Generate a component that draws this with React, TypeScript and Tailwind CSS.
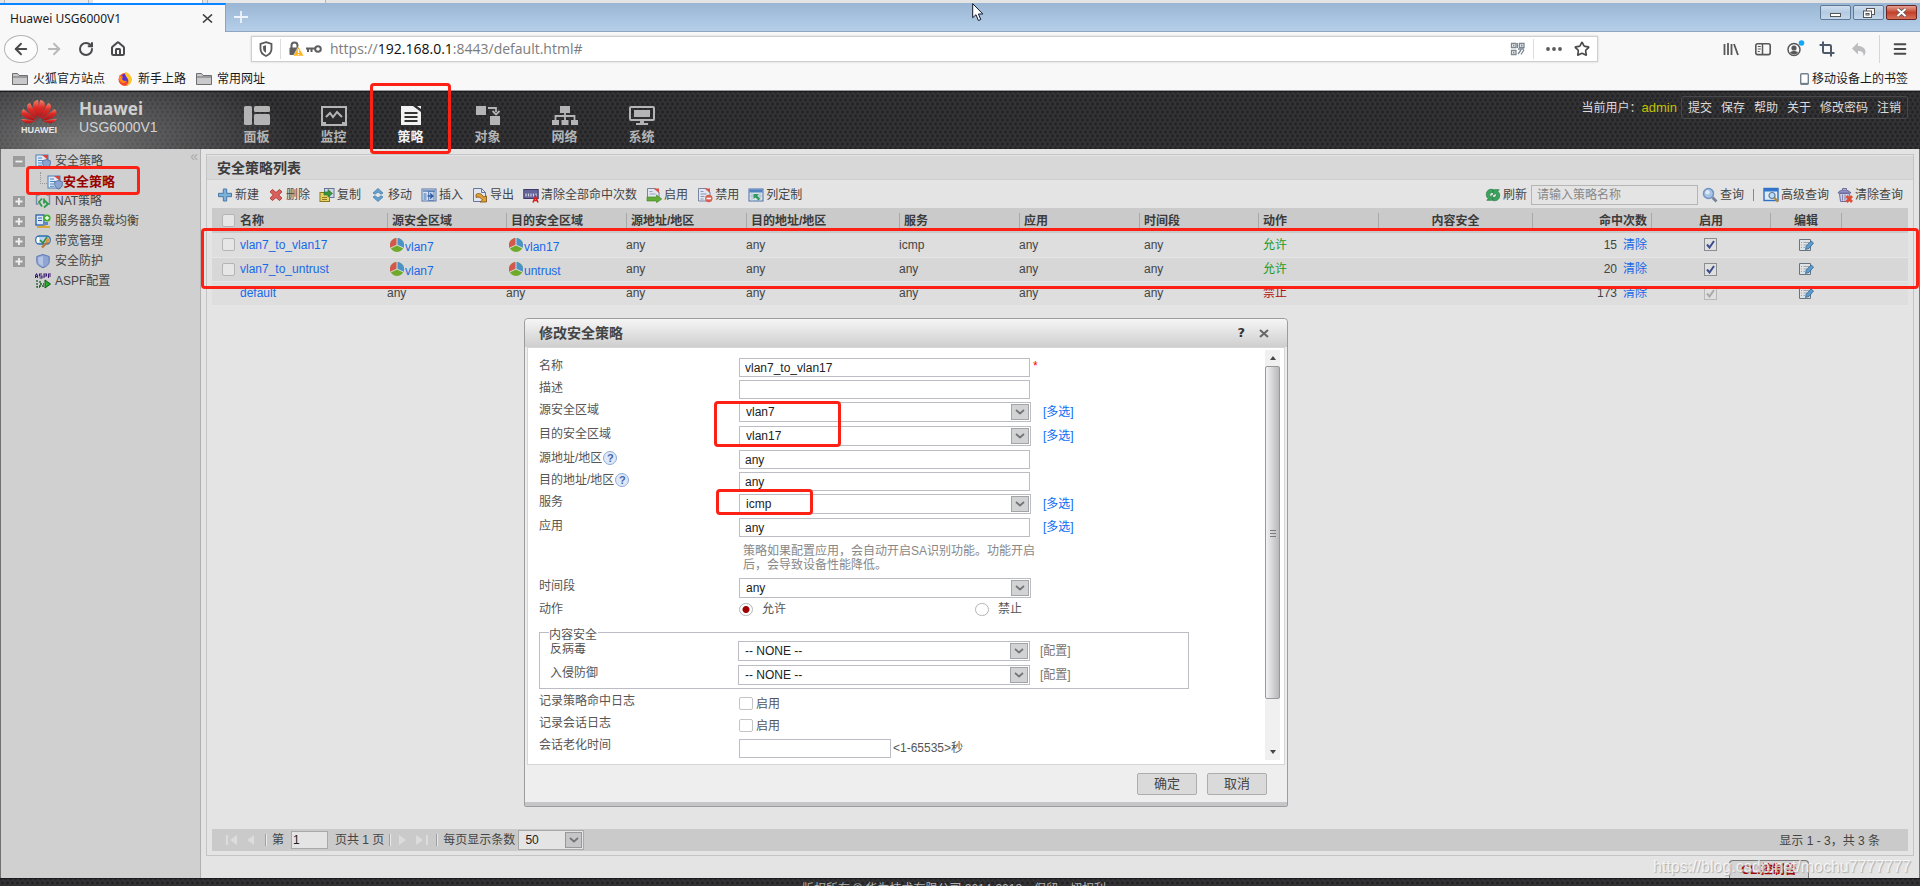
import { useState } from 'react';
import type { ReactNode } from 'react';
import { Menu, Star, Crop, House, RotateCw, ArrowLeft, ArrowRight } from 'lucide-react';

type IconProps = { className?: string };

/* ---------- browser icons ---------- */

const Shield = () => (
  <svg className="h-4 w-4" viewBox="0 0 16 16" fill="none" stroke="#5a5a5c">
    <path d="M8 1.2 13.5 3v5c0 3.4-2.4 5.6-5.5 7-3.1-1.4-5.5-3.6-5.5-7V3z" strokeWidth="1.8" />
    <path d="M8 4.2v7.5c-1.8-1-2.9-2.2-2.900-4V5z" fill="#5a5a5c" stroke="none" />
  </svg>
);

const LockWarning = () => (
  <svg className="h-4 w-4" viewBox="0 0 16 16">
    <path d="M3.5 7V4.500a3 3 0 0 1 6 0V7" fill="none" stroke="#5f5f62" strokeWidth="2" />
    <rect x="1.5" y="6.500" width="9.5" height="7.5" rx="1" fill="#5f5f62" />
    <path d="m10.5 5.500 5.300 9.500H5.200z" fill="#ffb41f" stroke="#fff" strokeWidth=".5" />
    <path d="M10.5 8.500v3.500M10.500 13v1" stroke="#fff" strokeWidth="1.3" />
  </svg>
);

const Key = () => (
  <svg className="h-4 w-4" viewBox="0 0 16 16" fill="none" stroke="#5f5f61" strokeWidth="2">
    <circle cx="12" cy="8" r="2.8" />
    <path d="M9 7.500H0M2 8v3M5.500 8v3" />
  </svg>
);

const QrCode = () => (
  <svg className="h-4 w-4" viewBox="0 0 16 16" fill="none" stroke="#7d8794" strokeWidth="1.3">
    <path d="M1.500 2.500h4.500v4H1.500zM9.500 2.500H14v4H9.500zM1.500 9.500h4.500v4H1.500zM3 4.500h1.500M11 4.500h1.500M3 11.500h1.500" />
    <path d="m8 13 3-4M11 13.500l3-4.500M7.500 2v5M8 8h6" />
  </svg>
);

const Library = () => (
  <svg className="h-4 w-4" viewBox="0 0 16 16" stroke="#58585a" strokeWidth="1.8">
    <path d="M1.500 3v11M5 2v12M8.500 3v11M11 3l4 11" />
  </svg>
);

const SidebarIcon = () => (
  <svg className="h-4 w-4" viewBox="0 0 16 16" fill="none" stroke="#58585a">
    <rect x=".8" y="2.800" width="14.4" height="10.8" rx="1.8" strokeWidth="1.6" />
    <path d="M7.500 3v10" strokeWidth="1.5" />
    <path d="M2.800 5.500h3M2.800 8h3M2.800 10.500h2" />
  </svg>
);

const Account = () => (
  <svg className="h-4 w-4 overflow-visible" viewBox="0 0 16 16">
    <circle cx="7" cy="8.500" r="6" fill="none" stroke="#58585a" strokeWidth="1.5" />
    <circle cx="7" cy="7" r="2.6" fill="#58585a" />
    <path d="M3 11.500c1.500-2 6.500-2 8 0-1 1.300-2.500 2-4 2s-3-.7-4-2" fill="#58585a" />
    <circle cx="14.500" cy="2" r="2.8" fill="#12a8f5" />
  </svg>
);

const UndoArrow = () => (
  <svg className="h-4 w-4" viewBox="0 0 16 16" fill="#bdbdbf">
    <path d="M7 1.500v3.500c4.500 0 7.500 2.500 7.500 6 0 1.500-.7 3-2 4 .5-3.500-1.500-5-5.500-5v3.500L1 7.500z" />
  </svg>
);

const Folder = () => (
  <svg className="h-4 w-4" viewBox="0 0 16 16">
    <path d="M.5 13.500v-11h5l1.500 2h8.500v9z" fill="#c9c9cb" stroke="#6e6e70" />
    <path d="M.5 6h15" stroke="#6e6e70" />
  </svg>
);

const Firefox = () => (
  <svg className="h-4 w-4" viewBox="0 0 16 16">
    <circle cx="8" cy="8.500" r="6.500" fill="#f4462d" />
    <circle cx="8.500" cy="7" r="4.200" fill="#5a2fd6" />
    <path d="M8 .8c3.500 1 6.500 3.700 6.500 7.700 0 3-2 6-6 6.300 3-1.500 3.600-4 2.500-6.200C10 6 7.500 4.500 8 .8" fill="#ffc92e" />
    <path d="M2.500 4c1 1.500 2 1.500 3.500 1.500L5 8c1 2 3 2.500 5 1.500-1 3-5.500 3.500-7.500 0-.8-1.800-.6-4 0-5.500" fill="#ff8a16" />
  </svg>
);

const HuaweiLogo = () => (
  <svg className="h-6 w-[38px]" viewBox="0 0 38 24" preserveAspectRatio="none">
    <defs>
      <linearGradient id="petal" x1="0" y1="0" x2="0" y2="1">
        <stop offset="0" stopColor="#f0836a" />
        <stop offset=".4" stopColor="#dc2b27" />
        <stop offset="1" stopColor="#a8161a" />
      </linearGradient>
    </defs>
    <g fill="url(#petal)">
      <path d="M18.300 19C14.500 13 12 8 13.500 3c.8-2 2.700-2.800 4.500-3 1.500 6 1.500 13 .3 19" />
      <path d="M19.700 19C23.500 13 26 8 24.500 3c-.8-2-2.700-2.800-4.500-3-1.500 6-1.500 13-.3 19" />
      <path d="M17 19.800C11 16 6.500 10 7 6c.3-1.500 1.500-2.600 3-3 3 4.500 5.500 10.500 7 16.800" />
      <path d="M21 19.800C27 16 31.500 10 31 6c-.3-1.500-1.500-2.600-3-3-3 4.500-5.500 10.500-7 16.800" />
      <path d="M16 20.500C8 20 1.800 17 1.500 13c-.1-1.800.8-3.200 2-4C7.500 12 12.500 16 16 20.500" />
      <path d="M22 20.500C30 20 36.200 17 36.500 13c.1-1.800-.8-3.200-2-4C30.500 12 25.500 16 22 20.500" />
      <path d="M15.500 21.300C10 24 4 24.200 1 19c5 .2 10 1 14.500 2.300" />
      <path d="M22.500 21.300C28 24 34 24.200 37 19c-5 .2-10 1-14.500 2.300" />
    </g>
  </svg>
);

/* ---------- main navigation icons ---------- */

const NavDashboard = () => (
  <svg className="h-5 w-[26px]" viewBox="0 0 26 20" fill="currentColor">
    <rect x="0" y="0" width="8" height="19" rx="1.500" />
    <rect x="10" y="0" width="16" height="6" rx="1.500" />
    <rect x="10" y="8" width="16" height="11" rx="1.500" />
  </svg>
);

const NavMonitor = () => (
  <svg className="h-5 w-[26px]" viewBox="0 0 26 20" fill="none" stroke="currentColor" strokeWidth="2">
    <rect x="1" y="1" width="24" height="18" fill="#2b2b2d" />
    <path d="m5 11 4-4 3 4 4-5 5 5" />
    <path d="M2 17h3M21 17h4" />
  </svg>
);

const NavPolicy = () => (
  <svg className="h-5 w-[26px]" viewBox="0 0 26 20">
    <path d="M3 0h12l8 6v13H3z" fill="currentColor" />
    <path d="M19 0h4v3z" fill="currentColor" />
    <path d="M6.500 7h13M6.500 11h13M6.500 15h13" stroke="#333" strokeWidth="1.800" />
  </svg>
);

const NavObject = () => (
  <svg className="h-5 w-[26px]" viewBox="0 0 26 20" fill="currentColor">
    <rect x="1" y="0" width="10" height="9" />
    <rect x="15" y="10" width="10" height="9" />
    <path d="M13 2h8v4M17.500 5l3.500 3.500L24.500 5" fill="none" stroke="currentColor" strokeWidth="1.800" />
  </svg>
);

const NavNetwork = () => (
  <svg className="h-5 w-[26px]" viewBox="0 0 26 20" fill="currentColor">
    <rect x="8" y="0" width="10" height="7" />
    <rect x="0" y="14" width="7" height="5" />
    <rect x="9.500" y="14" width="7" height="5" />
    <rect x="19" y="14" width="7" height="5" />
    <path d="M13 6v8M3.500 14v-4h19v4" fill="none" stroke="currentColor" strokeWidth="1.800" />
  </svg>
);

const NavSystem = () => (
  <svg className="h-5 w-[26px]" viewBox="0 0 26 20" fill="currentColor">
    <rect x="1" y="1" width="24" height="13" rx="1" fill="none" stroke="currentColor" strokeWidth="2" />
    <rect x="5" y="4" width="16" height="7" />
    <path d="M11 14h4v3h4v2H7v-2h4z" />
  </svg>
);

/* ---------- page icons ---------- */

const PolicyIcon = () => (
  <svg className="h-4 w-4 shrink-0" viewBox="0 0 16 16">
    <rect x="1" y="2" width="12" height="12" fill="#dfeaf6" stroke="#4d7fb5" />
    <path d="M3 5h4M3 7.500h5M3 10h4M3 12.300h4" stroke="#4f88c6" />
    <path d="M7 2h6v5z" fill="#d9453b" />
    <path d="m11.500 6.500 3.800 1.200v3c0 2-1.600 3.300-3.800 4.300-2.200-1-3.800-2.300-3.800-4.300v-3z" fill="#8ba4d2" stroke="#4a659f" strokeWidth=".8" />
  </svg>
);

const NatIcon = () => (
  <svg className="h-4 w-4 shrink-0" viewBox="0 0 16 16" fill="none">
    <path d="M4.500 2H1.500v9h2M11.500 2h3v9h-2" stroke="#7a8ea8" strokeWidth="1.400" />
    <path d="M7 5.500 4 9l3 4.500M9 5.500v5M9 7l4 4-4 3.500" stroke="#2f9c4c" strokeWidth="1.800" />
  </svg>
);

const ServerIcon = () => (
  <svg className="h-4 w-4 shrink-0" viewBox="0 0 16 16">
    <rect x="1" y="2" width="8" height="10" fill="#dce8f7" stroke="#2b5fa8" strokeWidth="1.300" />
    <path d="M3 5h4M3 7.500h4" stroke="#2b5fa8" />
    <circle cx="12" cy="5" r="3.600" fill="#3fb32a" />
    <path d="M12 3v4M10 5h4" stroke="#fff" strokeWidth="1.300" />
    <path d="M2 14h13M10 10v4" stroke="#d8a93a" strokeWidth="2" />
    <rect x="8" y="9" width="5" height="3" fill="#5c88c4" />
  </svg>
);

const BandwidthIcon = () => (
  <svg className="h-4 w-4 shrink-0" viewBox="0 0 16 16">
    <rect x=".8" y="3" width="14.400" height="8" rx="3.500" fill="#b6d2ef" stroke="#2f6cb0" strokeWidth="1.300" />
    <ellipse cx="3" cy="7" rx="1.500" ry="3" fill="#fff" />
    <path d="m5 7 3 3 4-6" fill="none" stroke="#2d8b3d" strokeWidth="1.600" />
    <path d="m7 14.500 6-6" stroke="#b87a3c" strokeWidth="2.400" />
    <circle cx="13" cy="7.500" r="2.200" fill="#d99a4a" />
  </svg>
);

const DefenseIcon = () => (
  <svg className="h-4 w-4 shrink-0" viewBox="0 0 16 16">
    <path d="m8 1.500 6.200 2v5c0 3-2.700 4.900-6.200 6.300-3.500-1.400-6.200-3.300-6.200-6.300v-5z" fill="#8fa6d4" stroke="#5a76b5" />
    <path d="M8 3 3.200 4.500v4c0 2.200 2 3.600 4.800 4.800z" fill="#b4c4e4" />
  </svg>
);

const AspfIcon = () => (
  <svg className="h-4 w-4 shrink-0" viewBox="0 0 16 16" fill="none">
    <path d="M.5 5V2.500L1.500 1l1 1.500V5M.5 3.500h2M7 1H4.500v2H7v2H4.500M9 5V1h2.500v2H9M13.500 5V1H16M13.500 3H16" stroke="#3b1d74" strokeWidth="1.100" />
    <path d="M2 7v7h3M5 8v3h4M4 13h5" stroke="#1c5c2a" strokeWidth="1.300" strokeDasharray="2 1" />
    <path d="m10 7 5.500 4-5.500 4z" fill="#30a82c" stroke="#0e5f18" />
  </svg>
);

const AddIcon = () => (
  <svg className="h-4 w-4" viewBox="0 0 16 16">
    <path d="M6.300 2h3.400v4.300H14.500v3.400H9.700V14H6.300V9.700H1.500V6.300h4.800z" fill="#7fb0d8" stroke="#4479a8" />
  </svg>
);

const DeleteIcon = () => (
  <svg className="h-4 w-4" viewBox="0 0 16 16">
    <path d="m4.500 2.500 3.500 3 3.500-3 2.500 2.300-3.300 3.200 3.300 3.200-2.500 2.300-3.500-3-3.500 3L2 11.200 5.300 8 2 4.800z" fill="#d9605c" stroke="#b03f3c" />
  </svg>
);

const CopyIcon = () => (
  <svg className="h-4 w-4" viewBox="0 0 16 16">
    <rect x="5.500" y="1.500" width="9.500" height="9" fill="#cfd6e4" stroke="#67759b" />
    <rect x="1" y="5.500" width="9.500" height="9" fill="#e6d164" stroke="#8d7922" />
    <path d="M3 10.500h5M3 12.500h5" stroke="#8d7922" />
    <path d="M5 5h4V2.500L13.500 6.500 9 10V8H5z" fill="#39963e" stroke="#1f6d2a" strokeWidth=".6" />
  </svg>
);

const MoveIcon = () => (
  <svg className="h-4 w-4" viewBox="0 0 16 16">
    <path d="M8 1.500 13 6l-2 1.200L8 5 5 7.200 3 6zM8 14.500 3 10l2-1.200L8 11l3-2.200 2 1.200z" fill="#67a3d2" stroke="#437fae" strokeWidth=".8" />
  </svg>
);

const InsertIcon = () => (
  <svg className="h-4 w-4" viewBox="0 0 16 16">
    <rect x="1" y="2" width="14" height="12" fill="#dbe4ef" stroke="#5876a6" />
    <rect x="2" y="3" width="12" height="2" fill="#7a9ac6" />
    <rect x="2.500" y="6" width="3" height="7" fill="#86a5d0" />
    <rect x="7.500" y="4.500" width="5.500" height="9" fill="#c2d3e9" stroke="#4f74ad" strokeWidth=".8" />
    <path d="M6.500 9h5M9 6.500l3 2.500-3 2.500" fill="none" stroke="#2b5aa6" strokeWidth="1.300" />
  </svg>
);

const ExportIcon = () => (
  <svg className="h-4 w-4" viewBox="0 0 16 16">
    <path d="M1.500 1.500h8l4 4v9h-12z" fill="#e2e6ee" stroke="#6576a3" />
    <path d="M9.500 1.500v4h4" fill="none" stroke="#6576a3" />
    <path d="M4 7.500c3-2.500 6.500 0 7.500 2.500l3-1v6H8l2.500-2C9 10.500 6.500 9.500 4 10.500z" fill="#e0a034" stroke="#7c5214" strokeWidth=".8" />
  </svg>
);

const ClearHitIcon = () => (
  <svg className="h-4 w-4" viewBox="0 0 16 16">
    <rect x=".8" y="2.500" width="14.400" height="9" fill="#65649a" stroke="#3c3b6a" />
    <path d="M3 6.500v3M5.500 6.500v3M8 6.500v3M10.500 6.500v3M13 6.500v3" stroke="#d0d0e8" strokeWidth="1.200" />
    <path d="m10 15.500 2.500-6 2.500 6M11 13.500h3" fill="none" stroke="#d8201c" strokeWidth="1.600" />
  </svg>
);

const EnableIcon = () => (
  <svg className="h-4 w-4" viewBox="0 0 16 16">
    <path d="M1.500 1.500h8l3.500 3.500v8H1.500z" fill="#e2e6ee" stroke="#7684a5" />
    <path d="M7.500 1.500 13 6V1.500z" fill="#d9534a" />
    <path d="M3.500 4.500h3M3.500 7h6" stroke="#98a5c2" />
    <path d="M1 10h9.500V8L15.800 12l-5.300 3.700V14H1z" fill="#62ad3a" stroke="#437f20" strokeWidth=".6" />
  </svg>
);

const DisableIcon = () => (
  <svg className="h-4 w-4" viewBox="0 0 16 16">
    <path d="M1.500 1.500h8l3.500 3.500v9H1.500z" fill="#e2e6ee" stroke="#7684a5" />
    <path d="M7.500 1.500 13 6V1.500z" fill="#d9534a" />
    <path d="M3.500 4.500h3M3.500 7h6M3.500 9.500h4M3.500 12h3" stroke="#8896b6" />
    <circle cx="11.800" cy="11.500" r="3.700" fill="#d9604f" />
    <path d="M9.500 11.500h4.600" stroke="#fff" strokeWidth="1.600" />
  </svg>
);

const ColumnsIcon = () => (
  <svg className="h-4 w-4" viewBox="0 0 16 16">
    <rect x="1" y="2" width="14" height="12" fill="#dde6e6" stroke="#4c6fae" />
    <rect x="1.500" y="2.500" width="13" height="3" fill="#4f82c0" />
    <path d="M4 6v8M12 6v8M2 9h12" stroke="#a9bfd8" />
    <path d="M5.500 7H11L9.200 8.700l3 3-1.700 1.700-3-3L5.500 12z" fill="#2e9a5c" />
  </svg>
);

const RefreshIcon = () => (
  <svg className="h-4 w-4" viewBox="0 0 16 16" fill="#3aa35c" stroke="#237c40" strokeWidth=".7">
    <path d="M8 2.500C4 1.500 1.300 4 1.300 7.500c0 2 .9 3.300 2 4.300L1.800 13.300H7.500V8L5.600 9.700C4 8 4.500 5.300 8 5.500z" />
    <path d="M8 13.500c4 1 6.700-1.500 6.700-5 0-2-.9-3.300-2-4.300l1.500-1.500H8.500V8l1.900-1.700c1.600 1.700 1.100 4.400-2.400 4.200z" />
  </svg>
);

const SearchIcon = () => (
  <svg className="h-4 w-4" viewBox="0 0 16 16">
    <circle cx="6.500" cy="6.500" r="5" fill="#a5c4e6" stroke="#7293c0" strokeWidth="1.500" />
    <circle cx="5.500" cy="5.300" r="2.200" fill="#dce8f5" />
    <path d="m10.500 10.500 4 4" stroke="#77829b" strokeWidth="2.800" />
  </svg>
);

const AdvancedSearchIcon = () => (
  <svg className="h-4 w-4" viewBox="0 0 16 16">
    <rect x="1" y="1.500" width="14" height="12" fill="#e2ebf5" stroke="#2f6fc4" strokeWidth="1.400" />
    <rect x="1" y="1.500" width="14" height="3" fill="#2f76cc" />
    <circle cx="9" cy="8.500" r="3" fill="#bcdcf7" stroke="#5c7f9f" strokeWidth="1.200" />
    <path d="m11.300 10.800 3.700 4" stroke="#b48a36" strokeWidth="2.200" />
  </svg>
);

const TrashIcon = () => (
  <svg className="h-4 w-4" viewBox="0 0 16 16">
    <path d="M2.500 6.500h10L11.500 14.500h-8z" fill="#d0d0e2" stroke="#6c6ca0" />
    <path d="M5.500 7.500v6M8 7.500v6" stroke="#8585b3" />
    <path d="M1 6C2.500 2 11.500 2 14 6z" fill="#9090bd" stroke="#6c6ca0" />
    <path d="M5.500 3V1.500h4V3" fill="none" stroke="#6c6ca0" />
    <path d="m9.500 9 5.500 6M15 9l-5.500 6" stroke="#dc4f36" strokeWidth="2.800" />
  </svg>
);

const ZoneIcon = () => (
  <svg className="h-4 w-4 shrink-0" viewBox="0 0 16 16">
    <circle cx="8" cy="8" r="7" fill="#6faa2a" />
    <path d="M8 8V1a7 7 0 0 1 6.300 10z" fill="#4a92c8" />
    <path d="M8 8 1.700 11A7 7 0 0 1 8 1z" fill="#d4574c" />
    <path d="M8 1v7M8 8l6.300 3M8 8l-6.300 3" stroke="#dfe6e8" strokeWidth=".9" />
  </svg>
);

const EditIcon = () => (
  <svg className="h-4 w-4" viewBox="0 0 16 16">
    <path d="M1.500 2.500h11v11h-11z" fill="#e0e3e6" stroke="#6a7480" />
    <path d="M3 5.500h1M5.500 5.500H11M3 8h1M5.500 8H9M3 10.500h1M5.500 10.500H7" stroke="#9aa3ae" />
    <path d="m7.500 12.500.8-3.500L13 4l2.500 2-4.500 5.500z" fill="#5c9ccf" stroke="#34658f" strokeWidth=".8" />
  </svg>
);

const HelpIcon = () => (
  <span className="ml-px flex h-[14px] w-[14px] items-center justify-center rounded-full border border-[#8fa9d6] bg-[#dfe8f7] text-[11px] leading-none font-bold text-[#3f68b3]">?</span>
);

const Chevron = ({ className }: IconProps) => (
  <svg className={className} viewBox="0 0 10 6" fill="none" stroke="#747476" strokeWidth="1.700">
    <path d="m1 1 4 3.500L9 1" />
  </svg>
);

const MousePointer = () => (
  <svg className="h-[19px] w-3" viewBox="0 0 12 19">
    <path d="M.7.7v14l3.300-3 2.400 5.800 2.400-1-2.400-5.500h4.500z" fill="#fff" stroke="#101828" />
  </svg>
);

/* ---------- data ---------- */

const navItems = [
  { label: '面板', icon: <NavDashboard /> },
  { label: '监控', icon: <NavMonitor /> },
  { label: '策略', icon: <NavPolicy />, active: true },
  { label: '对象', icon: <NavObject /> },
  { label: '网络', icon: <NavNetwork /> },
  { label: '系统', icon: <NavSystem /> },
];

const userLinks = ['提交', '保存', '帮助', '关于', '修改密码', '注销'];

const treeItems = [
  { label: 'NAT策略', icon: <NatIcon />, expandable: true },
  { label: '服务器负载均衡', icon: <ServerIcon />, expandable: true },
  { label: '带宽管理', icon: <BandwidthIcon />, expandable: true },
  { label: '安全防护', icon: <DefenseIcon />, expandable: true },
  { label: 'ASPF配置', icon: <AspfIcon />, expandable: false },
];

const tools = [
  { label: '新建', icon: <AddIcon /> },
  { label: '删除', icon: <DeleteIcon /> },
  { label: '复制', icon: <CopyIcon /> },
  { label: '移动', icon: <MoveIcon /> },
  { label: '插入', icon: <InsertIcon /> },
  { label: '导出', icon: <ExportIcon /> },
  { label: '清除全部命中次数', icon: <ClearHitIcon /> },
  { label: '启用', icon: <EnableIcon /> },
  { label: '禁用', icon: <DisableIcon /> },
  { label: '列定制', icon: <ColumnsIcon /> },
];

const rules = [
  { name: 'vlan7_to_vlan17', src: 'vlan7', dst: 'vlan17', service: 'icmp', allow: true, hits: 15 },
  { name: 'vlan7_to_untrust', src: 'vlan7', dst: 'untrust', service: 'any', allow: true, hits: 20 },
  { name: 'default', src: '', dst: '', service: 'any', allow: false, hits: 173 },
];

const plainHeads = ['源安全区域', '目的安全区域', '源地址/地区', '目的地址/地区', '服务', '应用', '时间段', '动作'];

/* ---------- shared pieces ---------- */

const Highlight = ({ className }: IconProps) => (
  <div className={`pointer-events-none absolute rounded-sm border-3 border-[#fd2014] ${className}`} />
);

const Divider = ({ className }: IconProps) => (
  <span className={`h-3 w-[2px] border-l border-[#a0a0a0] bg-[#e8e8e8] ${className}`} />
);

function ToolButton({ icon, label }: { icon: ReactNode; label: string }) {
  return (
    <button className="flex items-center gap-[2px] whitespace-nowrap">
      {icon}
      {label}
    </button>
  );
}

function DarkStrip({ className, children }: { className: string; children?: ReactNode }) {
  return (
    <div
      className={`bg-[#333335] bg-[radial-gradient(circle_at_center,#232325_1px,transparent_2px),radial-gradient(circle_at_center,#232325_1px,transparent_2px)] bg-[length:5px_8px] bg-[position:0_0,3px_4px] ${className}`}
    >
      {children}
    </div>
  );
}

/* ---------- browser chrome ---------- */

function BrowserChrome() {
  return (
    <div className="shrink-0 font-['Open_Sans','Noto_Sans_CJK_SC',sans-serif] text-[#18181a]">
      <div className="flex h-[3px] bg-[#e4e4e4]">
        <div className="ml-1 w-[85px] border-x border-[#b5b5b5] bg-[#ebebeb]" />
        <div className="ml-1 w-[110px] border-r border-[#b5b5b5] bg-white" />
        <div className="ml-1 w-[119px] border-x border-[#b5b5b5] bg-[#e9e9e9]" />
      </div>
      <div className="relative flex h-[29px] justify-between border-b border-[#8fa6bf] bg-linear-to-b from-[#9ab6d3] to-[#b5cfea]">
        <div className="flex">
          <div className="relative -mb-px flex w-[226px] items-center justify-between border-t-2 border-r border-t-[#0a84ff] border-r-[#8ba3bd] bg-[#f8f8f9] pr-3 pl-[10px] font-['Noto_Sans',sans-serif] text-xs">
            <span>Huawei USG6000V1</span>
            <button aria-label="关闭标签页">
              <svg className="h-[9px] w-[11px]" viewBox="0 0 11 9" stroke="#3e3e40" strokeWidth="1.600">
                <path d="m1 .5 9 8M10 .5l-9 8" />
              </svg>
            </button>
          </div>
          <button aria-label="新标签页" className="ml-2">
            <svg className="h-3 w-[14px]" viewBox="0 0 14 12" stroke="#eef4fb" strokeWidth="1.800">
              <path d="M7 0v12M0 6h14" />
            </svg>
          </button>
        </div>
        <div className="flex gap-[2px] pt-[2px] pr-[3px]">
          <button aria-label="最小化" className="flex h-[15px] w-[31px] items-center justify-center rounded-xs border border-[#5f7896] bg-linear-to-b from-[#cfdfef] via-[#b4cae1] to-[#c3d7ec]">
            <span className="mt-1 h-1 w-[11px] border border-[#555] bg-white" />
          </button>
          <button aria-label="还原" className="flex h-[15px] w-[31px] items-center justify-center rounded-xs border border-[#5f7896] bg-linear-to-b from-[#cfdfef] via-[#b4cae1] to-[#c3d7ec]">
            <svg className="h-[10px] w-3" viewBox="0 0 12 10" fill="#fff" stroke="#555">
              <rect x="3.500" y=".5" width="8" height="6" />
              <rect x=".5" y="3" width="8" height="6.500" />
              <rect x="3" y="5.500" width="3" height="1.500" />
            </svg>
          </button>
          <button aria-label="关闭" className="flex h-[15px] w-[31px] items-center justify-center rounded-xs border border-[#6b2420] bg-linear-to-b from-[#e3a093] via-[#c3402a] to-[#d4705a]">
            <svg className="h-[9px] w-[11px]" viewBox="0 0 11 9">
              <path d="m1.500 1 8 7M9.500 1l-8 7" stroke="#555" strokeWidth="3.500" />
              <path d="m1.500 1 8 7M9.500 1l-8 7" stroke="#fff" strokeWidth="2.200" />
            </svg>
          </button>
        </div>
        <div className="absolute top-0 left-[972px]">
          <MousePointer />
        </div>
      </div>

      <div className="flex h-[34px] items-center bg-[#f8f8f9] pr-3 pl-1 text-[#4a4a4c]">
        <button aria-label="后退" className="flex h-7 w-[34px] items-center justify-center rounded-[50%] border border-[#b4b4b6] bg-[#fcfcfc]">
          <ArrowLeft className="h-[18px] w-[18px]" strokeWidth={2.5} />
        </button>
        <button aria-label="前进" className="ml-[7px]">
          <ArrowRight className="h-[18px] w-[18px] text-[#b9b9bb]" strokeWidth={2.5} />
        </button>
        <button aria-label="刷新页面" className="ml-[15px]">
          <RotateCw className="h-4 w-4" strokeWidth={3} />
        </button>
        <button aria-label="主页" className="ml-4">
          <House className="h-4 w-4" strokeWidth={3} />
        </button>
        <div className="ml-[125px] flex h-[26px] flex-1 items-center border border-[#cfcfd1] bg-white pr-[7px] pl-[6px] shadow-[0_0_2px_#ccc]">
          <Shield />
          <span className="ml-[6px] h-5 w-px bg-[#dcdcde]" />
          <span className="ml-[7px]">
            <LockWarning />
          </span>
          <span className="ml-[2px]">
            <Key />
          </span>
          <span className="ml-2 flex-1 text-sm leading-5 text-[#7c7c7e]">
            https://<span className="text-[#0c0c0d]">192.168.0.1</span>:8443/default.html#
          </span>
          <QrCode />
          <span className="ml-[7px] h-5 w-px bg-[#dcdcde]" />
          <svg className="ml-3 h-1 w-4" viewBox="0 0 16 4" fill="#5a5a5c">
            <circle cx="2" cy="2" r="1.900" />
            <circle cx="8" cy="2" r="1.900" />
            <circle cx="14" cy="2" r="1.900" />
          </svg>
          <Star className="ml-3 h-4 w-4" strokeWidth={2.5} />
        </div>
        <div className="ml-[125px] flex items-center gap-4">
          <Library />
          <SidebarIcon />
          <Account />
          <Crop className="h-4 w-4 text-[#4e5a68]" strokeWidth={3} />
          <UndoArrow />
        </div>
        <span className="ml-3 h-7 w-px bg-[#d6d6d8]" />
        <Menu className="ml-3 h-4 w-4" strokeWidth={3} />
      </div>

      <div className="flex h-[25px] items-center border-b border-[#9a9a9c] bg-[#f8f8f9] pt-px pr-3 pl-3 text-xs">
        <a href="#" className="flex items-center gap-[5px]">
          <Folder />
          火狐官方站点
        </a>
        <a href="#" className="ml-3 flex items-center gap-[5px]">
          <Firefox />
          新手上路
        </a>
        <a href="#" className="ml-[10px] flex items-center gap-[5px]">
          <Folder />
          常用网址
        </a>
        <a href="#" className="ml-auto flex items-center gap-[3px]">
          <svg className="h-3 w-[9px]" viewBox="0 0 9 12">
            <rect x=".7" y=".7" width="7.600" height="10.600" rx="1" fill="#fff" stroke="#73808e" strokeWidth="1.400" />
            <path d="M1 10.500h7" stroke="#73808e" strokeWidth="1.400" />
          </svg>
          移动设备上的书签
        </a>
      </div>
    </div>
  );
}

/* ---------- device header ---------- */

function Header() {
  return (
    <DarkStrip className="relative shrink-0 border-t border-[#1c1c1e]">
      <header className="flex h-[57px] justify-between bg-[radial-gradient(ellipse_220px_90px_at_75px_50px,rgba(170,170,170,0.55),transparent)]">
        <div className="flex">
          <div className="ml-5 w-[38px] pt-2">
            <HuaweiLogo />
            <div className="mt-px text-center text-[9px] leading-[11px] font-bold text-[#e6e6e6]">HUAWEI</div>
          </div>
          <div className="ml-[21px] w-[127px] pt-[7px]">
            <div className="font-['Noto_Sans'] text-[17px] leading-5 font-bold text-[#cfcfcf]">Huawei</div>
            <div className="text-sm leading-4 text-[#d2d2d2]">USG6000V1</div>
          </div>
          <nav className="flex pl-3">
            {navItems.map((item) => (
              <a
                key={item.label}
                href="#"
                className={`relative flex w-[77px] flex-col items-center pt-[14px] text-[13px] leading-4 font-bold ${item.active ? 'text-[#f2f2f2]' : 'text-[#b4b4b4]'}`}
              >
                {item.icon}
                <span className="mt-[3px]">{item.label}</span>
                {item.active && <Highlight className="-top-[9px] -left-[2px] z-10 h-[71px] w-[81px]" />}
              </a>
            ))}
          </nav>
        </div>
        <div className="flex h-[31px] items-center pr-3 text-xs text-[#dcdcdc]">
          <span>当前用户：</span>
          <span className="mr-1 text-[13px] text-[#c3c200]">admin</span>
          <div className="flex h-[23px] items-center gap-[9px] rounded-xs border border-[#474749] px-[6px]">
            {userLinks.map((link) => (
              <a key={link} href="#">
                {link}
              </a>
            ))}
          </div>
        </div>
      </header>
    </DarkStrip>
  );
}

/* ---------- sidebar ---------- */

const Expander = ({ open }: { open?: boolean }) => (
  <svg className="h-[11px] w-3 shrink-0" viewBox="0 0 12 11">
    <rect width="12" height="11" fill="#9c9c9c" />
    <path d={open ? 'M2.500 5.500h7' : 'M2.500 5.500h7M6 2v7'} stroke="#f0f0f0" strokeWidth="1.800" />
  </svg>
);

function Sidebar() {
  return (
    <aside className="relative w-[201px] shrink-0 border-r border-l border-r-[#b0b0b0] border-l-[#707070] bg-[#d0d0d0] pt-[2px] text-xs text-[#444]">
      <span className="absolute -top-px right-[2px] text-sm leading-4 text-[#aaa]">«</span>
      <div className="flex h-5 items-center pl-3">
        <Expander open />
        <span className="ml-[10px]">
          <PolicyIcon />
        </span>
        <a href="#" className="ml-1">安全策略</a>
      </div>
      <div className="relative flex h-5 items-center pt-px pl-[39px]">
        <span className="-mt-2 h-3 w-[7px] border-b border-l border-dotted border-[#999]" />
        <PolicyIcon />
        <a href="#" className="text-[13px] font-bold text-[#990000]">安全策略</a>
        <Highlight className="-top-[5px] left-[25px] z-10 h-[29px] w-[114px]" />
      </div>
      {treeItems.map((item) => (
        <div key={item.label} className="flex h-5 items-center pl-3">
          {item.expandable ? <Expander /> : <span className="w-3" />}
          <span className="ml-[10px]">{item.icon}</span>
          <a href="#" className="ml-1">{item.label}</a>
        </div>
      ))}
    </aside>
  );
}

/* ---------- rule table ---------- */

function RuleTable() {
  return (
    <div className="relative mx-[5px]">
      <table className="w-full table-fixed border-collapse text-left text-xs text-[#444]">
        <colgroup>
          <col className="w-[24px]" />
          <col className="w-[151px]" />
          <col className="w-[119px]" />
          <col className="w-[120px]" />
          <col className="w-[120px]" />
          <col className="w-[153px]" />
          <col className="w-[120px]" />
          <col className="w-[120px]" />
          <col className="w-[119px]" />
          <col className="w-[120px]" />
          <col className="w-[154px]" />
          <col className="w-[119px]" />
          <col className="w-[119px]" />
          <col className="w-[71px]" />
          <col />
        </colgroup>
        <thead>
          <tr className="h-[25px] bg-[#cacaca] text-[#3c3c3c]">
            <th className="p-0 pl-[10px]">
              <input type="checkbox" aria-label="全选" className="block h-[13px] w-[13px] appearance-none rounded-xs border border-[#b4b4b4] bg-[#e6e6e6]" />
            </th>
            <th className="p-0 pl-1">名称</th>
            {plainHeads.map((head) => (
              <th key={head} className="p-0">
                <div className="h-4 border-l border-[#a8a8a8] pl-1 leading-4">{head}</div>
              </th>
            ))}
            <th className="p-0">
              <div className="h-4 border-l border-[#a8a8a8] text-center leading-4">内容安全</div>
            </th>
            <th className="p-0">
              <div className="h-4 border-l border-[#a8a8a8] pr-1 text-right leading-4">命中次数</div>
            </th>
            <th className="p-0">
              <div className="h-4 border-l border-[#a8a8a8] text-center leading-4">启用</div>
            </th>
            <th className="p-0">
              <div className="h-4 border-l border-[#a8a8a8] text-center leading-4">编辑</div>
            </th>
            <th className="p-0">
              <div className="h-4 border-l border-[#a8a8a8]" />
            </th>
          </tr>
        </thead>
        <tbody>
          {rules.map((rule) => (
            <tr key={rule.name} className="h-6 border-b border-[#e6e6e6] bg-[#dedede] even:bg-[#d7d7d7]">
              <td className="p-0 pl-[10px]">
                {rule.src && (
                  <input type="checkbox" aria-label={`选择 ${rule.name}`} className="block h-[13px] w-[13px] appearance-none rounded-xs border border-[#b4b4b4] bg-[#e6e6e6]" />
                )}
              </td>
              <td className="p-0 pl-1">
                <a href="#" className="text-[#1769e8]">{rule.name}</a>
              </td>
              {[rule.src, rule.dst].map((zone, i) => (
                <td key={i} className="p-0">
                  {zone ? (
                    <a href="#" className="flex items-center pl-[2px] text-[#1769e8]">
                      <ZoneIcon />
                      <span className="mt-1 leading-4">{zone}</span>
                    </a>
                  ) : (
                    'any'
                  )}
                </td>
              ))}
              <td className="p-0">any</td>
              <td className="p-0">any</td>
              <td className="p-0">{rule.service}</td>
              <td className="p-0">any</td>
              <td className="p-0 pl-[5px]">any</td>
              <td className={`p-0 pl-[5px] ${rule.allow ? 'text-[#1f9a25]' : 'text-[#b01010]'}`}>{rule.allow ? '允许' : '禁止'}</td>
              <td className="p-0" />
              <td className="p-0 pr-1 text-right">
                {rule.hits}
                <a href="#" className="ml-[6px] text-[#1769e8]">清除</a>
              </td>
              <td className="p-0">
                <label className="relative mx-auto block h-[13px] w-[13px]">
                  <input
                    type="checkbox"
                    defaultChecked
                    disabled={!rule.allow}
                    aria-label={`启用 ${rule.name}`}
                    className="block h-full w-full appearance-none border border-[#8a8d91] bg-[#e0e0e0] disabled:border-[#b8b8b8]"
                  />
                  <svg className="absolute top-[2px] left-[2px] h-[9px] w-[9px]" viewBox="0 0 9 9" fill="none" stroke={rule.allow ? '#3c4d8c' : '#aaa'} strokeWidth="2">
                    <path d="m1 4.500 2.500 3L8 1" />
                  </svg>
                </label>
              </td>
              <td className="p-0">
                <button aria-label={`编辑 ${rule.name}`} className="mx-auto block">
                  <EditIcon />
                </button>
              </td>
              <td className="p-0" />
            </tr>
          ))}
        </tbody>
      </table>
      <Highlight className="top-5 -right-[11px] -left-[11px] z-10 h-[61px]" />
    </div>
  );
}

function Pager() {
  return (
    <div className="mx-[5px] mb-1 flex h-[22px] items-center bg-[#cacaca] text-xs text-[#444]">
      <svg className="ml-[14px] h-[10px] w-[29px]" viewBox="0 0 29 10" fill="#dcdcdc">
        <path d="M0 0h2v10H0zM11 0v10L4 5zM28 0v10l-7-5z" />
      </svg>
      <Divider className="ml-[10px]" />
      <label htmlFor="page" className="ml-[5px]">第</label>
      <input id="page" defaultValue="1" className="ml-[7px] h-[18px] w-[37px] border border-[#a9a9ab] bg-[#e4e4e4] px-px text-[#222]" />
      <span className="ml-[7px]">页共 1 页</span>
      <Divider className="ml-[5px]" />
      <svg className="ml-2 h-[10px] w-[29px]" viewBox="0 0 29 10" fill="#dcdcdc">
        <path d="M0 0v10l7-5zM17 0v10l7-5zM27 0h2v10h-2z" />
      </svg>
      <Divider className="ml-2" />
      <label htmlFor="size" className="ml-[5px]">每页显示条数</label>
      <div className="relative ml-[3px]">
        <select id="size" defaultValue="50" className="block h-5 w-[66px] appearance-none border border-[#a9a9ab] bg-[#e4e4e4] pl-[6px] text-[#222]">
          <option>50</option>
        </select>
        <span className="pointer-events-none absolute top-[2px] right-[2px] flex h-4 w-[17px] items-center justify-center border border-[#98989c] bg-[#c6c6c8]">
          <Chevron className="h-[6px] w-[10px]" />
        </span>
      </div>
      <span className="ml-auto pt-[2px] pr-7">显示 1 - 3，共 3 条</span>
    </div>
  );
}

/* ---------- policy dialog ---------- */

function TextField({ id, label, value, help, required, extra }: { id: string; label: string; value: string; help?: boolean; required?: boolean; extra?: string }) {
  return (
    <div className="flex h-[22px]">
      <label htmlFor={id} className="flex h-4 w-[200px] items-center">
        {label}
        {help && <HelpIcon />}
      </label>
      <input id={id} defaultValue={value} className="h-[19px] w-[291px] border border-[#bcbcc4] px-[5px] text-[#222]" />
      {required && <span className="ml-[3px] text-[#f00]">*</span>}
      {extra && <a href="#" className="ml-[13px] leading-[19px] text-[#0a6cf5]">{extra}</a>}
    </div>
  );
}

function SelectField({ id, label, value, extra, muted }: { id: string; label: string; value: string; extra?: string; muted?: boolean }) {
  return (
    <div className="flex h-6">
      <label htmlFor={id} className={`leading-4 ${muted ? 'w-[188px]' : 'w-[200px]'}`}>{label}</label>
      <div className="relative h-5 w-[292px]">
        <select id={id} defaultValue={value} className="block h-5 w-full appearance-none border border-[#bcbcc4] bg-white pl-[6px] text-[#222]">
          <option>{value}</option>
        </select>
        <span className="pointer-events-none absolute top-[2px] right-[2px] flex h-4 w-[18px] items-center justify-center border border-[#a4a4a8] bg-[#d2d3d5]">
          <Chevron className="h-[6px] w-[10px]" />
        </span>
      </div>
      {extra && <a href="#" className={`leading-5 ${muted ? 'ml-[10px] text-[#777]' : 'ml-3 text-[#0a6cf5]'}`}>{extra}</a>}
    </div>
  );
}

function LogField({ id, label }: { id: string; label: string }) {
  return (
    <div className="flex h-[22px]">
      <span className="w-[200px] leading-4">{label}</span>
      <input id={id} type="checkbox" className="mt-1 h-[13px] w-[14px] appearance-none rounded-xs border border-[#c4c4c4] bg-white" />
      <label htmlFor={id} className="mt-[3px] ml-[3px] leading-4">启用</label>
    </div>
  );
}

function PolicyDialog() {
  const [action, setAction] = useState('allow');

  return (
    <div className="absolute top-[169px] left-[524px] z-20 w-[764px] rounded-t-sm rounded-b-xs border border-[#9c9c9e] bg-[#eee] text-xs text-[#555]">
      <div className="flex h-7 items-center rounded-t-sm bg-linear-to-b from-[#f6f6f6] to-[#cecece] pr-[18px] pl-[14px]">
        <h2 className="text-sm font-bold text-[#444]">修改安全策略</h2>
        <button aria-label="帮助" className="ml-auto font-['DejaVu_Sans'] text-[13px] font-bold text-[#333]">?</button>
        <button aria-label="关闭" className="ml-[14px]">
          <svg className="h-[9px] w-[10px]" viewBox="0 0 10 9" stroke="#666" strokeWidth="2">
            <path d="m1 1 8 7M9 1 1 8" />
          </svg>
        </button>
      </div>

      <div className="mx-[2px] flex justify-between border border-[#d6d6d8] bg-white">
        <form className="pt-[10px] pl-[11px]">
          <div className="relative">
            <TextField id="name" label="名称" value="vlan7_to_vlan17" required />
            <TextField id="desc" label="描述" value="" />
            <SelectField id="src-zone" label="源安全区域" value="vlan7" extra="[多选]" />
            <SelectField id="dst-zone" label="目的安全区域" value="vlan17" extra="[多选]" />
            <TextField id="src-addr" label="源地址/地区" value="any" help />
            <TextField id="dst-addr" label="目的地址/地区" value="any" help />
            <SelectField id="service" label="服务" value="icmp" extra="[多选]" />
            <TextField id="app" label="应用" value="any" extra="[多选]" />
            <Highlight className="top-[43px] left-[175px] h-[46px] w-[127px]" />
            <Highlight className="top-[131px] left-[177px] h-[26px] w-[97px]" />
          </div>
          <p className="mt-1 mb-[6px] ml-[204px] w-[300px] leading-[14px] text-[#888]">
            策略如果配置应用，会自动开启SA识别功能。功能开启后，会导致设备性能降低。
          </p>
          <SelectField id="period" label="时间段" value="any" />
          <div className="flex h-[14px] items-center">
            <span className="w-[200px]">动作</span>
            <label className="flex w-[236px] items-center gap-[9px]">
              <input
                type="radio"
                name="action"
                checked={action === 'allow'}
                onChange={() => setAction('allow')}
                className="h-[13px] w-[14px] appearance-none rounded-full border border-[#b5b5b5] bg-white checked:bg-[radial-gradient(circle,#a00000_3px,white_4px)]"
              />
              允许
            </label>
            <label className="flex items-center gap-[9px]">
              <input
                type="radio"
                name="action"
                checked={action === 'deny'}
                onChange={() => setAction('deny')}
                className="h-[13px] w-[14px] appearance-none rounded-full border border-[#b5b5b5] bg-white checked:bg-[radial-gradient(circle,#a00000_3px,white_4px)]"
              />
              禁止
            </label>
          </div>
          <fieldset className="relative mt-4 h-[57px] w-[650px] border border-[#bcbcc4] pt-2 pl-[10px]">
            <legend className="absolute -top-[6px] left-[9px] bg-white pr-px leading-4">内容安全</legend>
            <SelectField id="av" label="反病毒" value="-- NONE --" extra="[配置]" muted />
            <SelectField id="ips" label="入侵防御" value="-- NONE --" extra="[配置]" muted />
          </fieldset>
          <div className="mt-1">
            <LogField id="hit-log" label="记录策略命中日志" />
            <LogField id="session-log" label="记录会话日志" />
          </div>
          <div className="flex h-[27px]">
            <label htmlFor="aging" className="w-[200px] leading-4">会话老化时间</label>
            <input id="aging" className="mt-[2px] h-[19px] w-[152px] border border-[#bcbcc4] px-[5px]" />
            <span className="mt-[2px] ml-[2px] leading-[19px]">&lt;1-65535&gt;秒</span>
          </div>
        </form>

        {/* scroll bar */}
        <div className="mt-[2px] mr-1 mb-1 flex w-[15px] flex-col items-center bg-[#f0f0f0]">
          <svg className="h-4 w-2 shrink-0" viewBox="0 0 8 16" fill="#444">
            <path d="m4 6 3 4H1z" />
          </svg>
          <div className="flex h-[333px] w-full items-center justify-center rounded-xs border border-[#98989a] bg-linear-to-r from-[#f2f2f4] to-[#b8b8ba]">
            <svg className="h-2 w-[6px]" viewBox="0 0 6 8" stroke="#7a7a7c">
              <path d="M0 1.500h6M0 4.500h6M0 7.500h6" />
            </svg>
          </div>
          <svg className="mt-auto h-4 w-2 shrink-0" viewBox="0 0 8 16" fill="#444">
            <path d="m4 10 3-4H1z" />
          </svg>
        </div>
      </div>

      <div className="flex h-[41px] justify-end gap-[10px] border-b-4 border-[#c6c6c8] pt-2 pr-5 text-[13px] text-[#444]">
        <button className="h-[22px] w-[60px] rounded-xs border border-[#adadaf] bg-[#dadadb]">确定</button>
        <button className="h-[22px] w-[60px] rounded-xs border border-[#adadaf] bg-[#dadadb]">取消</button>
      </div>
    </div>
  );
}

/* ---------- page ---------- */

export default function App() {
  return (
    <div className="relative flex h-screen flex-col overflow-hidden bg-[#e4e4e4] font-['Liberation_Sans','Noto_Sans_CJK_SC',sans-serif]">
      <BrowserChrome />
      <Header />

      <div className="relative flex min-h-0 flex-1">
        <Sidebar />
        <main className="flex min-w-0 flex-1 flex-col border-r border-[#777] pt-[5px] pr-[5px] pl-[5px]">
          <section className="flex flex-1 flex-col border border-[#c4c4c4]">
            <h1 className="mt-px flex h-6 shrink-0 items-center border-b border-[#cfcfcf] bg-[#d8d8d8] pl-[10px] text-sm leading-5 font-bold text-[#3c3c3c]">
              安全策略列表
            </h1>
            <div className="flex h-7 shrink-0 items-center pt-px pr-[10px] pl-[10px] text-xs text-[#444]">
              <div className="flex gap-[9px]">
                {tools.map((tool) => (
                  <ToolButton key={tool.label} icon={tool.icon} label={tool.label} />
                ))}
              </div>
              <div className="ml-auto flex items-center">
                <ToolButton icon={<RefreshIcon />} label="刷新" />
                <input
                  aria-label="策略名称"
                  placeholder="请输入策略名称"
                  className="ml-1 h-5 w-[167px] border border-[#b5b5b5] bg-[#e4e4e4] px-[5px] placeholder:text-[#888]"
                />
                <span className="ml-1">
                  <ToolButton icon={<SearchIcon />} label="查询" />
                </span>
                <span className="mr-[9px] ml-[9px] h-3 w-px bg-[#888]" />
                <div className="flex gap-2">
                  <ToolButton icon={<AdvancedSearchIcon />} label="高级查询" />
                  <ToolButton icon={<TrashIcon />} label="清除查询" />
                </div>
              </div>
            </div>
            <RuleTable />
            <div className="flex-1" />
            <Pager />
          </section>
          <div className="relative flex h-[22px] shrink-0 items-end justify-end pr-[105px]">
            <button className="h-[18px] w-20 rounded-t-sm border border-b-0 border-[#777] bg-[#d4d4d4] text-xs leading-4 font-bold text-[#a00000]">CLI控制台</button>
            <span className="absolute right-[3px] bottom-0 text-base leading-[22px] text-white/75 [text-shadow:1px_1px_1px_#aaa]">
              https://blog.csdn.net/mochu7777777
            </span>
          </div>
        </main>
        <PolicyDialog />
      </div>

      <DarkStrip className="h-2 shrink-0 overflow-hidden border-t border-[#1c1c1e]">
        <footer className="pt-[2px] text-center text-xs leading-4 text-[#b4b4b4]">
          版权所有 © 华为技术有限公司 2014-2018。保留一切权利。
        </footer>
      </DarkStrip>
    </div>
  );
}
